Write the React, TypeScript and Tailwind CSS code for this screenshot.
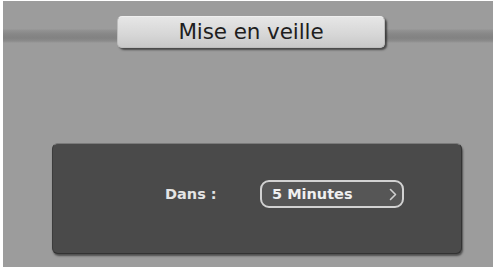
const font = `font-['DejaVu_Sans',Verdana,sans-serif]`;

function Chevron() {
  return (
    <svg width="8" height="13" viewBox="0 0 8 13" fill="none">
      <path d="M1.5 1.5 L6.5 6.5 L1.5 11.5" stroke="#cfcfcf" strokeWidth="1.6" strokeLinejoin="round" strokeLinecap="round" />
    </svg>
  );
}

export default function App() {
  return (
    <div className={`w-[493px] h-[267px] flex flex-col bg-[#9c9c9c] border-l-[3px] border-t border-white ${font}`}>
      {/* title bar with its grey band behind */}
      <div className="pt-[15px] pb-[1px] bg-[linear-gradient(to_bottom,transparent_28px,#939393_29px,#878787_33px,#828282_37px,#8b8b8b_40px,transparent_42px)]">
        <div className="ml-[114px] w-[268px] h-[32px] rounded-[5px] flex items-center justify-center bg-[linear-gradient(to_bottom,#e6e6e6,#d6d6d6_60%,#c8c8c8)] border border-[#bdbdbd] border-t-[#efefef] shadow-[2px_2px_2px_rgba(0,0,0,0.55)]">
          <span className="text-[21.5px] leading-none text-[#1e1e1e] tracking-[-0.1px]">Mise en veille</span>
        </div>
      </div>

      <div className="ml-[49px] mt-[94px] w-[410px] h-[111px] rounded-[6px] bg-[#4a4a4a] border border-[#333] border-t-[#7a7a7a] border-l-[#3c3c3c] shadow-[1px_2px_2px_rgba(0,0,0,0.5)]">
        <div className="flex items-center pt-[36px] pl-[112px]">
          <span className="w-[95px] text-[14.5px] font-bold text-[#e4e4e4] leading-none">Dans :</span>
          <div className="w-[144px] h-[28px] rounded-[9px] border-2 border-[#d2d2d2] bg-[#565656] flex items-center justify-between pl-[10px] pr-[5px]">
            <span className="text-[14.5px] font-bold text-[#f0f0f0] leading-none">5 Minutes</span>
            <Chevron />
          </div>
        </div>
      </div>
    </div>
  );
}
